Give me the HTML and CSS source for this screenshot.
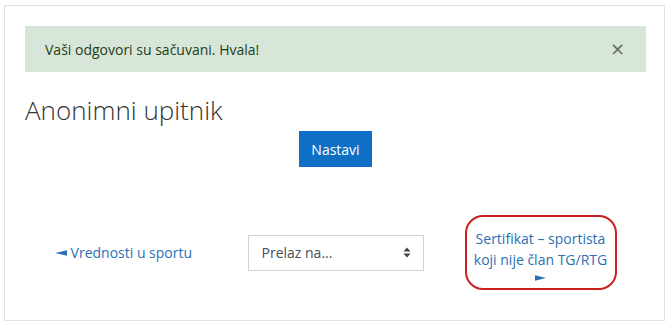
FILE: index.html
```html
<!DOCTYPE html>
<html lang="sr">
<head>
    <meta charset="UTF-8">
    <meta name="viewport" content="width=device-width, initial-scale=1.0">
    <title>Anonimni upitnik</title>
    <link rel="stylesheet" href="styles.css">
</head>
<body>
    <div class="card">
        <div class="alert">
            <span>Vaši odgovori su sačuvani. Hvala!</span>
            <button class="close" type="button">&times;</button>
        </div>

        <h2 class="title">Anonimni upitnik</h2>

        <div class="continue">
            <button class="btn-primary" type="button">Nastavi</button>
        </div>

        <div class="nav-row">
            <div class="nav-col">
                <a class="nav-link prev" href="#">
                    <svg class="arrow" width="12" height="6" viewBox="0 0 12 6"><path d="M0 3L12 0.3V5.7Z" fill="currentColor"/></svg>
                    Vrednosti u sportu
                </a>
            </div>
            <div class="nav-col">
                <div class="jump">
                    <span>Prelaz na...</span>
                    <svg width="8" height="11" viewBox="0 0 8 11"><path d="M4 0.5L7.5 4.5H0.5Z M4 10.5L7.5 6.5H0.5Z" fill="#444"/></svg>
                </div>
            </div>
            <div class="nav-col">
                <a class="nav-link next" href="#">
                    Sertifikat – sportista koji nije član TG/RTG
                    <svg class="arrow" width="11" height="6" viewBox="0 0 11 6"><path d="M11 3L0 0.3V5.7Z" fill="currentColor"/></svg>
                </a>
            </div>
        </div>
    </div>
</body>
</html>
```

FILE: styles.css
```css
body {
    margin: 0;
    background-color: #fff;
    font-family: "Open Sans", "Noto Sans", sans-serif;
    color: #1d2125;
}
.card {
    box-sizing: border-box;
    width: 661px;
    height: 316px;
    margin: 5px 0 0 4px;
    padding: 20px 18px 0 20px;
    border: 1px solid #dee2e6;
}
.alert {
    display: flex;
    align-items: center;
    justify-content: space-between;
    height: 46px;
    box-sizing: border-box;
    padding: 0 20px;
    background-color: #d7e6d8;
    color: #1c3f1a;
    font-size: 14px;
}
.close {
    border: none;
    background: none;
    padding: 0;
    margin-right: 1px;
    font-family: "DejaVu Sans", sans-serif;
    font-size: 18px;
    font-weight: 400;
    color: #616c62;
    line-height: 1;
    cursor: pointer;
}
.title {
    margin: 20px 0 0;
    font-size: 26px;
    font-weight: 300;
    line-height: 36px;
    color: #333;
}
.continue {
    display: flex;
    justify-content: center;
    margin-top: 3px;
}
.btn-primary {
    width: 73px;
    height: 36px;
    border: none;
    border-radius: 0;
    background-color: #0f6fc5;
    color: #fff;
    font-family: inherit;
    font-size: 14px;
    cursor: pointer;
}
.nav-row {
    display: flex;
    align-items: center;
    margin-top: 48px;
}
.nav-col {
    flex: 1;
    display: flex;
    justify-content: center;
}
.nav-link {
    color: #2a6fb5;
    text-decoration: none;
    font-size: 14px;
    line-height: 21px;
}
.nav-link .arrow {
    vertical-align: middle;
    margin-top: -2px;
}
.nav-link.prev {
    margin-right: 10px;
}
.nav-link.next {
    box-sizing: border-box;
    width: 152px;
    margin-right: 4px;
    padding: 11px 0 5px;
    border: 2px solid #cc1f1f;
    border-radius: 18px;
    text-align: center;
}
.nav-link.next .arrow {
    display: block;
    margin: 5px auto 2px;
}
.jump {
    box-sizing: border-box;
    display: flex;
    align-items: center;
    justify-content: space-between;
    width: 176px;
    height: 36px;
    padding: 0 12px 0 13px;
    border: 1px solid #ced4da;
    color: #495057;
    font-size: 14px;
}
```
